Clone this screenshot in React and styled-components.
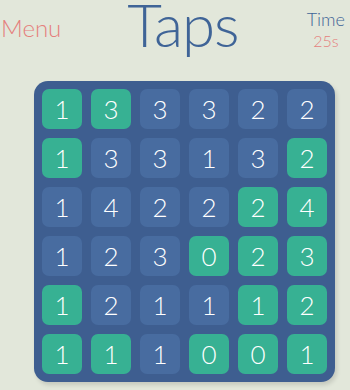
import React from "react";
import styled, { createGlobalStyle } from "styled-components";

const Global = createGlobalStyle`
  html, body { margin: 0; padding: 0; }
  body {
    background: #e2e7da;
    font-family: "Lato", "Liberation Sans", sans-serif;
    width: 350px;
    height: 390px;
    overflow: hidden;
  }
`;

const Page = styled.div`
  display: flex;
  flex-direction: column;
  width: 350px;
  height: 390px;
`;

const Header = styled.header`
  display: flex;
  align-items: flex-start;
  height: 81px;
  padding: 0 5px 0 1px;
  box-sizing: border-box;
`;

const MenuLabel = styled.div`
  color: #e57f7d;
  font-size: 24px;
  font-weight: 300;
  margin-top: 16px;
  line-height: 1;
`;

const Title = styled.h1`
  margin: 0 0 0 66px;
  color: #3f6497;
  font-size: 60px;
  font-weight: 300;
  line-height: 48px;
  letter-spacing: -1px;
`;

const TimeBox = styled.div`
  margin-left: auto;
  margin-top: 10px;
  display: flex;
  flex-direction: column;
  align-items: center;
  line-height: 1;
`;

const TimeLabel = styled.div`
  color: #3f6497;
  font-size: 18px;
  font-weight: 300;
`;

const TimeValue = styled.div`
  color: #e57f7d;
  font-size: 16px;
  font-weight: 300;
  margin-top: 5px;
`;

const Board = styled.div`
  margin-left: 34px;
  width: 301px;
  height: 301px;
  box-sizing: border-box;
  padding: 8px;
  background: #3e5e90;
  border-radius: 14px;
  box-shadow: 2px 3px 4px rgba(0, 0, 0, 0.13);
  display: grid;
  grid-template-columns: repeat(6, 40px);
  grid-template-rows: repeat(6, 40px);
  gap: 9px;
`;

const Cell = styled.div`
  border-radius: 7px;
  background: ${(p) => (p.$on ? "#37b193" : "#486ca0")};
  color: #ffffff;
  font-size: 26px;
  font-weight: 300;
  display: flex;
  align-items: center;
  justify-content: center;
`;

const grid = [
  ["1g", "3g", "3", "3", "2", "2"],
  ["1g", "3", "3", "1", "3", "2g"],
  ["1", "4", "2", "2", "2g", "4g"],
  ["1", "2", "3", "0g", "2g", "3g"],
  ["1g", "2", "1", "1", "1g", "2g"],
  ["1g", "1g", "1", "0g", "0g", "1g"],
];

export default function App() {
  return (
    <Page>
      <Global />
      <Header>
        <MenuLabel>Menu</MenuLabel>
        <Title>Taps</Title>
        <TimeBox>
          <TimeLabel>Time</TimeLabel>
          <TimeValue>25s</TimeValue>
        </TimeBox>
      </Header>
      <Board>
        {grid.flat().map((c, i) => (
          <Cell key={i} $on={c.endsWith("g")}>
            {c[0]}
          </Cell>
        ))}
      </Board>
    </Page>
  );
}
